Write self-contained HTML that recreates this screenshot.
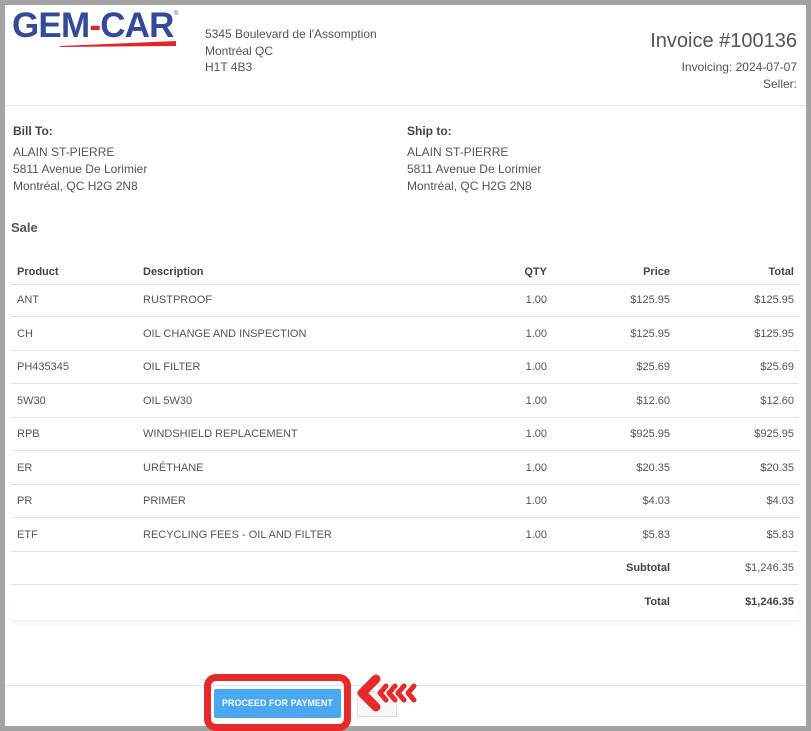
<!DOCTYPE html>
<html><head><meta charset="utf-8"><style>
*{margin:0;padding:0;box-sizing:border-box}
body{width:811px;height:731px;background:#a3a3a3;font-family:"Liberation Sans",sans-serif;color:#555;position:relative;overflow:hidden}
.page{position:absolute;left:5px;top:5px;width:801px;height:721px;background:#fff}
.a{position:absolute;white-space:nowrap}
.s{font-size:12px;line-height:17px}
.line{position:absolute;height:1px;background:#e3e3e3}
.r{text-align:right}
b{font-weight:bold;color:#444}
</style></head><body>
<div class="page"></div>
<div class="a" style="left:12px;top:8px;font-size:35px;line-height:36px;font-weight:bold;color:#34499a;letter-spacing:-0.8px">GEM<span style="color:#e3232b">-</span>CAR</div>
<div class="a" style="left:174px;top:11px;font-size:6px;color:#34499a">®</div>
<svg class="a" style="left:60px;top:41px" width="116" height="6"><polygon points="0,5 116,0 116,5 0,6" fill="#e3232b"/></svg>
<div class="a s" style="left:205px;top:26px;line-height:16.5px">5345 Boulevard de l'Assomption<br>Montréal QC<br>H1T 4B3</div>
<div class="a" style="right:14px;top:30px;font-size:20px;color:#555">Invoice #100136</div>
<div class="a s r" style="right:14px;top:59px;line-height:17px">Invoicing: 2024-07-07<br>Seller:</div>
<div class="line" style="left:5px;top:105px;width:801px"></div>
<div class="a s" style="left:13px;top:123px"><b style="font-size:12px">Bill To:</b></div>
<div class="a s" style="left:13px;top:144px">ALAIN ST-PIERRE<br>5811 Avenue De Lorimier<br>Montréal, QC H2G 2N8</div>
<div class="a s" style="left:407px;top:123px"><b>Ship to:</b></div>
<div class="a s" style="left:407px;top:144px">ALAIN ST-PIERRE<br>5811 Avenue De Lorimier<br>Montréal, QC H2G 2N8</div>
<div class="a" style="left:11px;top:220px;font-size:13px;font-weight:bold;color:#555">Sale</div>
<div style="position:absolute;left:11px;top:600px;width:788px;height:20px;box-shadow:0 3px 4px rgba(0,0,0,0.05)"></div>
<div id="t"></div>
<script>
var rows=[["Product","Description","QTY","Price","Total",1],["ANT","RUSTPROOF","1.00","$125.95","$125.95"],["CH","OIL CHANGE AND INSPECTION","1.00","$125.95","$125.95"],["PH435345","OIL FILTER","1.00","$25.69","$25.69"],["5W30","OIL 5W30","1.00","$12.60","$12.60"],["RPB","WINDSHIELD REPLACEMENT","1.00","$925.95","$925.95"],["ER","URÉTHANE","1.00","$20.35","$20.35"],["PR","PRIMER","1.00","$4.03","$4.03"],["ETF","RECYCLING FEES - OIL AND FILTER","1.00","$5.83","$5.83"],["","","","Subtotal","$1,246.35",2],["","","","Total","$1,246.35",3]];
var h="",ys=[271,299,333,366,400,433,467,500,534,567,601];
rows.forEach(function(r,i){var y=ys[i]-5,bd=r[5]==1,st='font-size:11px;'+(bd?'font-weight:bold;color:#444;':'');
h+='<div class="a" style="left:17px;top:'+y+'px;'+st+'">'+r[0]+'</div>';
h+='<div class="a" style="left:143px;top:'+y+'px;'+st+'">'+r[1]+'</div>';
h+='<div class="a r" style="right:264px;top:'+y+'px;'+st+'">'+r[2]+'</div>';
h+='<div class="a r" style="right:141px;top:'+y+'px;'+st+(r[5]>1?'font-weight:bold;color:#444;':'')+'">'+r[3]+'</div>';
h+='<div class="a r" style="right:17px;top:'+y+'px;'+st+(r[5]==3?'font-weight:bold;color:#444;':'')+'">'+r[4]+'</div>';
if(i<10)h+='<div class="line" style="left:11px;width:788px;top:'+(i==0?284:Math.round((ys[i]+ys[i+1])/2))+'px"></div>';});
document.getElementById('t').innerHTML=h;
</script>
<div class="line" style="left:5px;top:685px;width:801px"></div>
<div class="a" style="left:357px;top:691px;width:40px;height:26px;border:1px solid #ddd;background:#f7f7f7"></div>
<div class="a" style="left:204px;top:674px;width:147px;height:57px;border:7px solid #e42a2a;border-radius:12px;background:transparent"></div>
<div class="a" style="left:214px;top:689px;width:127px;height:29px;background:#4aa8f0;border-radius:2px;color:#fff;font-size:9px;font-weight:bold;line-height:29px;text-align:center">PROCEED FOR PAYMENT</div>
<svg class="a" style="left:356px;top:674px" width="66" height="40" viewBox="0 0 66 40"><g fill="none" stroke="#e42a2a" stroke-linecap="round" stroke-linejoin="round"><polyline points="20,5 6,19 20,33" stroke-width="9"/><polyline points="30,12 24,19 30,26" stroke-width="5"/><polyline points="39,12 33,19 39,26" stroke-width="5"/><polyline points="48,12 42,19 48,26" stroke-width="5"/><polyline points="58,12 52,19 58,26" stroke-width="5"/></g></svg>
</body></html>
